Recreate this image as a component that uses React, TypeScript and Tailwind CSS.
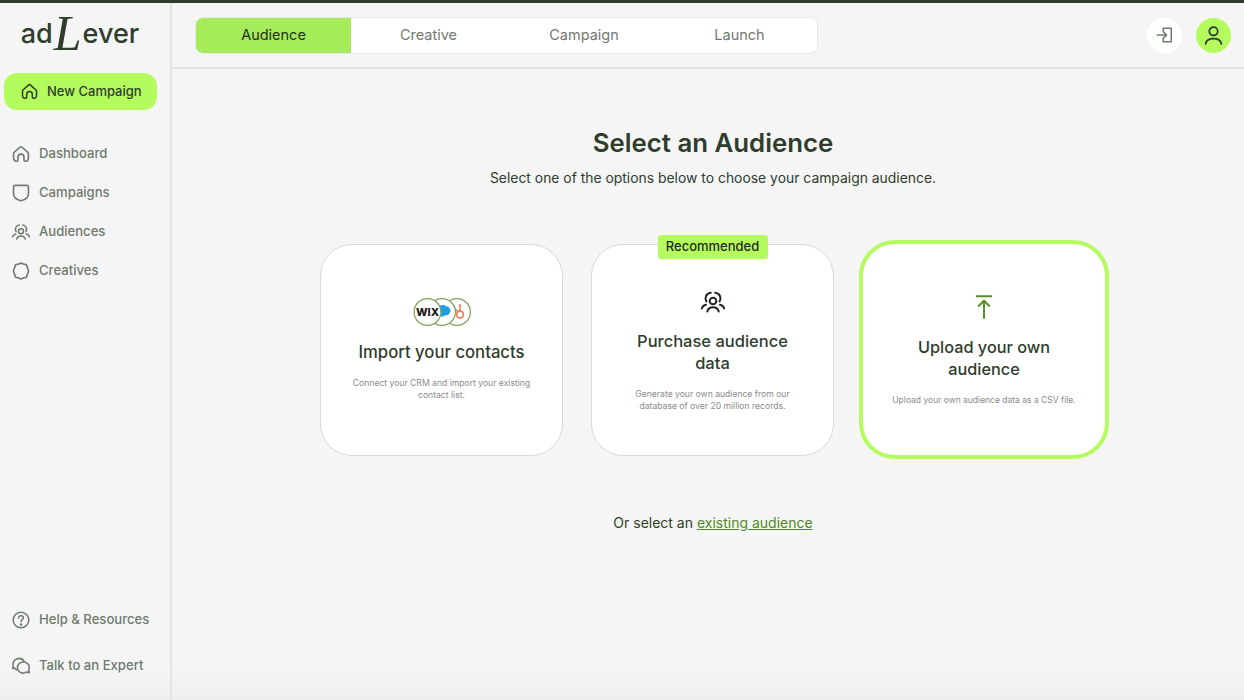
import React from "react";

const Home = ({ className = "" }: { className?: string }) => (
  <svg viewBox="0 0 20 20" fill="none" stroke="currentColor" strokeWidth="1.800" strokeLinejoin="round" strokeLinecap="round" className={className}>
    <path d="M2 8.500 8.800 2.500a1.800 1.800 0 0 1 2.400 0L18 8.500c.4 1.200.4 6.400-.2 8-.3.9-1 1.500-2 1.500h-1.300c-.7 0-1.200-.5-1.200-1.200v-3.400a3.300 3.300 0 0 0-6.600 0v3.400c0 .7-.5 1.200-1.200 1.200H4.200c-1 0-1.700-.6-2-1.500-.6-1.600-.6-6.800-.2-8Z" />
  </svg>
);
const Shield = ({ className = "" }: { className?: string }) => (
  <svg viewBox="0 0 20 20" fill="none" stroke="currentColor" strokeWidth="1.800" strokeLinejoin="round" className={className}>
    <path d="M3.500 1.500h13c1.100 0 1.800.7 1.800 1.800v7.700c0 3.800-3.300 6.200-8.300 7.700-5-1.500-8.300-3.900-8.300-7.700V3.300c0-1.100.7-1.800 1.800-1.800Z" />
  </svg>
);
const People = ({ className = "" }: { className?: string }) => (
  <svg viewBox="0 0 24 24" fill="none" stroke="currentColor" strokeWidth="2" strokeLinecap="round" className={className}>
    <circle cx="12" cy="11" r="3.300" />
    <path d="M6.300 21.500c.7-3 2.900-4.300 5.700-4.300s5 1.300 5.700 4.300" />
    <path d="M5.500 11.500C3.300 8 5 3.200 9.800 2.700M18.500 11.500c2.200-3.500.5-8.300-4.300-8.800" />
    <path d="M.8 18.500c.7-2 2.200-3.400 4.200-3.800M23.200 18.500c-.7-2-2.200-3.400-4.200-3.800" />
  </svg>
);
const Badge = ({ className = "" }: { className?: string }) => (
  <svg viewBox="0 0 20 20" fill="none" stroke="currentColor" strokeWidth="1.800" strokeLinejoin="round" className={className}>
    <path d="M10 1.200c1.100 0 1.900.8 2.900 1.200 1 .3 2.200 0 3 .8.800.8.800 1.900 1.100 2.900.3 1 1.300 2.600 1.300 3.900s-1 2.900-1.300 3.900c-.3 1-.3 2.100-1.100 2.900-.8.800-2 .5-3 .8-1 .4-1.800 1.200-2.900 1.200s-1.900-.8-2.900-1.200c-1-.3-2.200 0-3-.8-.8-.8-.8-1.900-1.100-2.900C2.700 12.900 1.700 11.300 1.700 10s1-2.900 1.300-3.900c.3-1 .3-2.100 1.100-2.900.8-.8 2-.5 3-.8 1-.4 1.800-1.200 2.900-1.200Z" />
  </svg>
);
const Question = ({ className = "" }: { className?: string }) => (
  <svg viewBox="0 0 20 20" fill="none" stroke="currentColor" strokeWidth="1.700" strokeLinecap="round" className={className}>
    <circle cx="10" cy="10" r="8.700" />
    <path d="M7.300 7.800c0-1.600 1.200-2.600 2.700-2.600s2.700 1 2.700 2.400c0 2-2.700 2.100-2.700 4" />
    <circle cx="10" cy="15" r=".6" fill="currentColor" />
  </svg>
);
const Chat = ({ className = "" }: { className?: string }) => (
  <svg viewBox="0 0 20 20" fill="none" stroke="currentColor" strokeWidth="1.700" strokeLinejoin="round" strokeLinecap="round" className={className}>
    <path d="M5.500 14.500a6.700 6.700 0 0 1-3-2.400L.8 12.700l.5-2.900A6.700 6.700 0 0 1 13.500 4.800" />
    <path d="M12.300 5.500a6.200 6.200 0 1 0 3.500 11.300l3.500.8-.8-3.300A6.200 6.200 0 0 0 12.300 5.500Z" />
  </svg>
);

const NavItem = ({ icon, label }: { icon: React.ReactNode; label: string }) => (
  <div className="flex h-[39px] items-center gap-[9px] pl-[12px] text-[13.100px] font-medium text-[#6f7a6e]">
    {icon}
    <span>{label}</span>
  </div>
);

const Wix = () => (
  <svg viewBox="0 0 58 30" className="h-[30px] w-[58px]">
    <circle cx="44" cy="15" r="13.400" fill="#fff" stroke="#7f9f5c" strokeWidth="1.200" />
    <path d="M47 9v5.500" stroke="#f47a54" strokeWidth="1.500" />
    <circle cx="47" cy="8" r="1.100" fill="#f47a54" />
    <circle cx="47" cy="17.500" r="3.400" fill="none" stroke="#f47a54" strokeWidth="1.700" />
    <path d="M42 11.500l3 3.500" stroke="#f47a54" strokeWidth="1.300" />
    <circle cx="29" cy="15" r="13.400" fill="#fff" stroke="#7f9f5c" strokeWidth="1.200" />
    <path d="M28 8.500c2-1 3.800-.5 4.700.8 1.500-.4 3.300.5 3.800 2.100 1.300.8 1.500 3.500.2 4.700-.6 1.700-2.800 2.600-4.400 1.900-1.300 1.800-4 2-5.500.7-1.800.3-3-1-3-2.200V9.500c1.500-1.500 3-1.500 4.200-1Z" fill="#1ba1e2" />
    <circle cx="14.500" cy="15" r="13.400" fill="#fff" stroke="#7f9f5c" strokeWidth="1.200" />
    <text x="14.500" y="18.800" textAnchor="middle" fontFamily="Inter, sans-serif" fontSize="11" fontWeight="800" fill="#1a1a1a">WIX</text>
  </svg>
);

export default function App() {
  return (
    <div
      className="flex h-[700px] w-[1244px] flex-col overflow-hidden bg-[#f5f5f5] text-[#2f3d2c]"
      style={{ fontFamily: "Inter, 'Liberation Sans', sans-serif" }}
    >
      <div className="h-[3px] shrink-0 bg-[#2f3d2c]" />
      <div className="flex min-h-0 flex-1">
        <aside className="flex w-[172px] shrink-0 flex-col border-r-2 border-[#e4e4e4] bg-gradient-to-b from-[#f5f5f5] from-95% to-[#efefef]">
          <div className="flex h-[60px] items-center justify-center pr-[10px] pt-[3px] text-[27px] font-medium text-[#2f3d2c]">
            <span>ad</span>
            <span className="mx-[1px] mb-[3px] text-[50px] leading-none italic" style={{ fontFamily: "'Liberation Serif', serif" }}>L</span>
            <span>ever</span>
          </div>
          <div className="mx-[4px] mt-[10px] flex h-[37px] w-[153px] items-center gap-[9px] rounded-[13px] bg-[#b4fb5e] pl-[17px] text-[13px] font-medium text-[#2f3d2c]">
            <Home className="h-[17px] w-[17px]" />
            <span>New Campaign</span>
          </div>
          <nav className="mt-[24px] flex flex-col">
            <NavItem icon={<Home className="h-[18px] w-[18px]" />} label="Dashboard" />
            <NavItem icon={<Shield className="h-[18px] w-[18px]" />} label="Campaigns" />
            <NavItem icon={<People className="h-[18px] w-[18px]" />} label="Audiences" />
            <NavItem icon={<Badge className="h-[18px] w-[18px]" />} label="Creatives" />
          </nav>
          <div className="mt-auto flex flex-col gap-[7px] pb-[15px]">
            <NavItem icon={<Question className="h-[18px] w-[18px]" />} label="Help & Resources" />
            <NavItem icon={<Chat className="h-[18px] w-[18px]" />} label="Talk to an Expert" />
          </div>
        </aside>
        <main className="flex min-w-0 flex-1 flex-col">
          <header className="flex h-[66px] shrink-0 items-center justify-between border-b-2 border-[#e4e4e4] pl-[23px] pr-[13px]">
            <div className="flex h-[37px] w-[623px] overflow-hidden rounded-[8px] border border-[#e8e8e8] bg-white text-[14.500px] text-[#737873]">
              <div className="flex w-[155px] items-center justify-center bg-[#a6eb5a] text-[#22301f]">Audience</div>
              <div className="flex w-[155px] items-center justify-center">Creative</div>
              <div className="flex w-[156px] items-center justify-center">Campaign</div>
              <div className="flex w-[155px] items-center justify-center">Launch</div>
            </div>
            <div className="flex items-center gap-[14px]">
              <div className="flex h-[35px] w-[35px] items-center justify-center rounded-full bg-white text-[#6f7a6e]">
                <svg viewBox="0 0 20 20" fill="none" stroke="currentColor" strokeWidth="1.700" strokeLinecap="round" strokeLinejoin="round" className="h-[18px] w-[18px]">
                  <path d="M8 6V2.500h9v15H8V14" />
                  <path d="M1.500 10h10M8.500 6.800l3.200 3.200-3.200 3.200" />
                </svg>
              </div>
              <div className="flex h-[35px] w-[35px] items-center justify-center rounded-full bg-[#b4fb5e] text-[#2f3d2c]">
                <svg viewBox="0 0 20 20" fill="none" stroke="currentColor" strokeWidth="1.700" strokeLinecap="round" className="h-[21px] w-[21px]">
                  <circle cx="10" cy="6" r="4" />
                  <path d="M2.500 18c.6-3.500 3.700-5 7.500-5s6.900 1.500 7.500 5" />
                </svg>
              </div>
            </div>
          </header>
          <div className="flex flex-1 flex-col items-center bg-gradient-to-b from-[#f5f5f5] from-95% to-[#efefef] pl-[10px]">
            <h1 className="mt-[56px] text-[25.800px] leading-[36px] font-semibold text-[#2f3d2c]">Select an Audience</h1>
            <p className="mt-[7px] text-[13.900px] leading-[20px] text-[#2f3d2c]">Select one of the options below to choose your campaign audience.</p>
            <div className="mt-[52px] ml-[3px] flex w-[789px] items-center gap-[28px]">
              <div className="flex h-[212px] w-[243px] flex-col items-center rounded-[32px] border border-[#d9d9d9] bg-white text-center">
                <div className="mt-[52px]"><Wix /></div>
                <h2 className="mt-[14px] text-[16.700px] leading-[22px] font-medium text-[#2f3d2c]">Import your contacts</h2>
                <p className="mt-[14px] w-[190px] text-[8.600px] leading-[12px] text-[#8a8a8a]">Connect your CRM and import your existing contact list.</p>
              </div>
              <div className="relative flex h-[212px] w-[243px] flex-col items-center rounded-[32px] border border-[#d9d9d9] bg-white text-center">
                <div className="absolute top-[-10px] flex h-[24px] w-[110px] items-center justify-center rounded-[3px] bg-[#b4fb5e] text-[13px] font-medium text-[#1f2b1c]">Recommended</div>
                <People className="mt-[45px] h-[24px] w-[24px] text-[#1e281c]" />
                <h2 className="mt-[16px] w-[170px] text-[16.500px] leading-[22px] font-medium text-[#2f3d2c]">Purchase audience data</h2>
                <p className="mt-[14px] w-[170px] text-[8.600px] leading-[12px] text-[#8a8a8a]">Generate your own audience from our database of over 20 million records.</p>
              </div>
              <div className="ml-[-3px] flex h-[219px] w-[250px] flex-col items-center rounded-[36px] border-4 border-[#b4fb5e] bg-white text-center">
                <svg viewBox="0 0 20 28" fill="none" stroke="#5a8f2c" strokeWidth="2.200" className="mt-[50px] h-[26px] w-[18px]">
                  <path d="M1 2h18M10 27V7M3.500 13.500 10 7l6.500 6.500" />
                </svg>
                <h2 className="mt-[16px] w-[170px] text-[16.300px] leading-[22px] font-medium text-[#2f3d2c]">Upload your own audience</h2>
                <p className="mt-[14px] w-[200px] text-[8.500px] leading-[12px] text-[#8a8a8a]">Upload your own audience data as a CSV file.</p>
              </div>
            </div>
            <p className="mt-[54px] text-[14px] leading-[20px] text-[#2f3d2c]">
              Or select an <span className="text-[#4d8a1f] underline">existing audience</span>
            </p>
          </div>
        </main>
      </div>
    </div>
  );
}
